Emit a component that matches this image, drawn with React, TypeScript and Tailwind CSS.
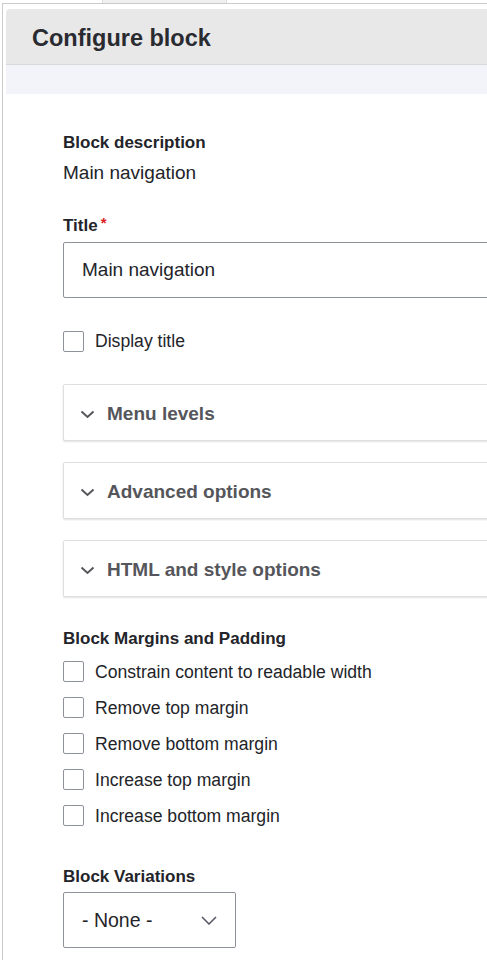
import React from "react";

function Checkbox({ label }: { label: string }) {
  return (
    <div className="flex items-center h-[24px]">
      <span className="w-[21px] h-[21px] border border-[#8e929c] rounded-[2px] bg-white shrink-0" />
      <span className="ml-[11px] text-[17.6px] leading-[24px] text-[#232429]">{label}</span>
    </div>
  );
}

function Details({ title }: { title: string }) {
  return (
    <div className="w-[440px] h-[57px] border border-[#dedee3] rounded-[2px] bg-white shadow-[0_1px_2px_rgba(0,0,0,0.12)] flex items-center pt-[3px] pl-[16px]">
      <svg width="15" height="9" viewBox="0 0 15 9" className="shrink-0">
        <polyline points="1.5,1.5 7.5,7 13.5,1.5" fill="none" stroke="#55565b" strokeWidth="2" />
      </svg>
      <span className="ml-[12px] text-[19px] font-bold leading-[24px] text-[#55565b]">{title}</span>
    </div>
  );
}

export default function App() {
  return (
    <div className="w-[487px] h-[960px] bg-white overflow-hidden font-['Liberation_Sans',Arial,sans-serif] text-[#232429]">
      <div className="h-[3px]">
        <div className="ml-[102px] w-[125px] h-[3px] bg-[#f0f0f0] border-x border-[#dcdcdc]" />
      </div>
      <div className="ml-[2px] border-t border-l border-[#cbcbcb] pl-[3px] pt-[5px] h-[957px]">
        <div className="h-[56px] bg-[#e8e8e8] rounded-tl-[4px] border-b border-[#d9d9d9] pl-[26px] pt-[2px] flex items-center">
          <span className="text-[23.5px] font-bold leading-[28px] text-[#2a2b30]">Configure block</span>
        </div>
        <div className="h-[29px] bg-[#f3f4f9]" />
        <div className="pl-[57px] flex flex-col items-start">
          <div className="mt-[37px] text-[17px] font-bold leading-[24px]">Block description</div>
          <div className="mt-[4px] text-[19px] leading-[28px]">Main navigation</div>
          <div className="mt-[27px] text-[17px] font-bold leading-[24px] flex items-start">
            <span>Title</span>
            <span className="ml-[3px] text-[#dc2323] text-[15px] leading-[18px]">*</span>
          </div>
          <div className="mt-[4px] w-[440px] h-[56px] border border-[#8e929c] rounded-[2px] flex items-center pl-[18px]">
            <span className="text-[19px] leading-[28px]">Main navigation</span>
          </div>
          <div className="mt-[31px]">
            <Checkbox label="Display title" />
          </div>
          <div className="mt-[31px] flex flex-col gap-[21px]">
            <Details title="Menu levels" />
            <Details title="Advanced options" />
            <Details title="HTML and style options" />
          </div>
          <div className="mt-[30px] text-[17px] font-bold leading-[24px]">Block Margins and Padding</div>
          <div className="mt-[8.5px] flex flex-col gap-[12px]">
            <Checkbox label="Constrain content to readable width" />
            <Checkbox label="Remove top margin" />
            <Checkbox label="Remove bottom margin" />
            <Checkbox label="Increase top margin" />
            <Checkbox label="Increase bottom margin" />
          </div>
          <div className="mt-[37px] text-[17px] font-bold leading-[24px]">Block Variations</div>
          <div className="mt-[3.5px] w-[173px] h-[56px] border border-[#8e929c] rounded-[2px] flex items-center pl-[18px] pr-[18px] justify-between">
            <span className="text-[19.5px] leading-[28px]">- None -</span>
            <svg width="16" height="9" viewBox="0 0 16 9">
              <polyline points="1,1 8,8 15,1" fill="none" stroke="#545560" strokeWidth="1.5" />
            </svg>
          </div>
        </div>
      </div>
    </div>
  );
}
